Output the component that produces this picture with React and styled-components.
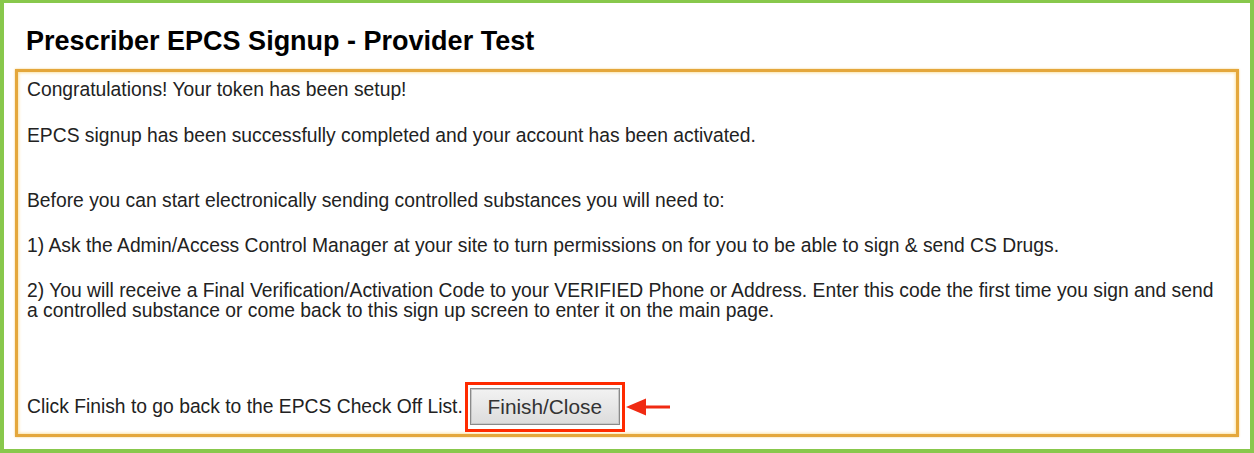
import React from "react";
import styled, { createGlobalStyle } from "styled-components";

const Global = createGlobalStyle`
  html, body { margin: 0; padding: 0; background: #ffffff; }
  body { font-family: "Liberation Sans", Arial, sans-serif; }
`;

const Frame = styled.div`
  box-sizing: border-box;
  width: 1254px;
  height: 453px;
  border-style: solid;
  border-color: #88c84c;
  border-width: 3px 4px 4px 4px;
  background: #ffffff;
  padding: 23px 11px 0 11px;
  display: flex;
  flex-direction: column;
`;

const Title = styled.h1`
  margin: 0 0 12px 11px;
  font-size: 27px;
  line-height: 31px;
  font-weight: 700;
  color: #000;
`;

const Panel = styled.div`
  box-sizing: border-box;
  height: 368px;
  border: 3px solid #e4a73c;
  box-shadow: inset 0 0 3px 1px #fbe3a8, 0 0 2px #f3cf86;
  padding: 8px 9px 2px 9px;
  display: flex;
  flex-direction: column;
  color: #222;
  font-size: 19.3px;
  line-height: 20px;
`;

const Para = styled.p`
  margin: 0 0 ${(p) => (p.$gap !== undefined ? p.$gap : 26)}px 0;
`;

const Footer = styled.div`
  margin-top: auto;
  display: flex;
  align-items: center;
`;

const Highlight = styled.span`
  display: inline-flex;
  border: 3px solid #ff2a00;
  padding: 3px 2px 4px 2px;
  margin-left: 2px;
`;

const Button = styled.button`
  box-sizing: border-box;
  width: 150px;
  height: 37px;
  border: 1px solid #8a8a8a;
  box-shadow: inset 0 0 0 1px #c8c8c8;
  background: linear-gradient(#f2f2f2, #dcdcdc);
  font-family: "Liberation Sans", Arial, sans-serif;
  font-size: 20.8px;
  color: #333;
  padding: 0;
  cursor: pointer;
`;

const Arrow = styled.svg`
  margin-left: 1px;
  display: block;
`;

export default function App() {
  return (
    <>
      <Global />
      <Frame>
        <Title>Prescriber EPCS Signup - Provider Test</Title>
        <Panel>
          <Para>Congratulations! Your token has been setup!</Para>
          <Para $gap={45}>
            EPCS signup has been successfully completed and your account has been activated.
          </Para>
          <Para $gap={25}>
            Before you can start electronically sending controlled substances you will need to:
          </Para>
          <Para $gap={25}>
            1) Ask the Admin/Access Control Manager at your site to turn permissions on for you to be able to sign &amp; send CS Drugs.
          </Para>
          <Para $gap={0}>
            2) You will receive a Final Verification/Activation Code to your VERIFIED Phone or Address. Enter this code the first time you sign and send a controlled substance or come back to this sign up screen to enter it on the main page.
          </Para>
          <Footer>
            <span>Click Finish to go back to the EPCS Check Off List.</span>
            <Highlight>
              <Button type="button">Finish/Close</Button>
            </Highlight>
            <Arrow width="44" height="20" viewBox="0 0 44 20" aria-hidden="true">
              <polygon points="0,10 20,1.5 20,18.5" fill="#f02a12" />
              <rect x="18" y="8.5" width="26" height="3" fill="#f02a12" />
            </Arrow>
          </Footer>
        </Panel>
      </Frame>
    </>
  );
}
